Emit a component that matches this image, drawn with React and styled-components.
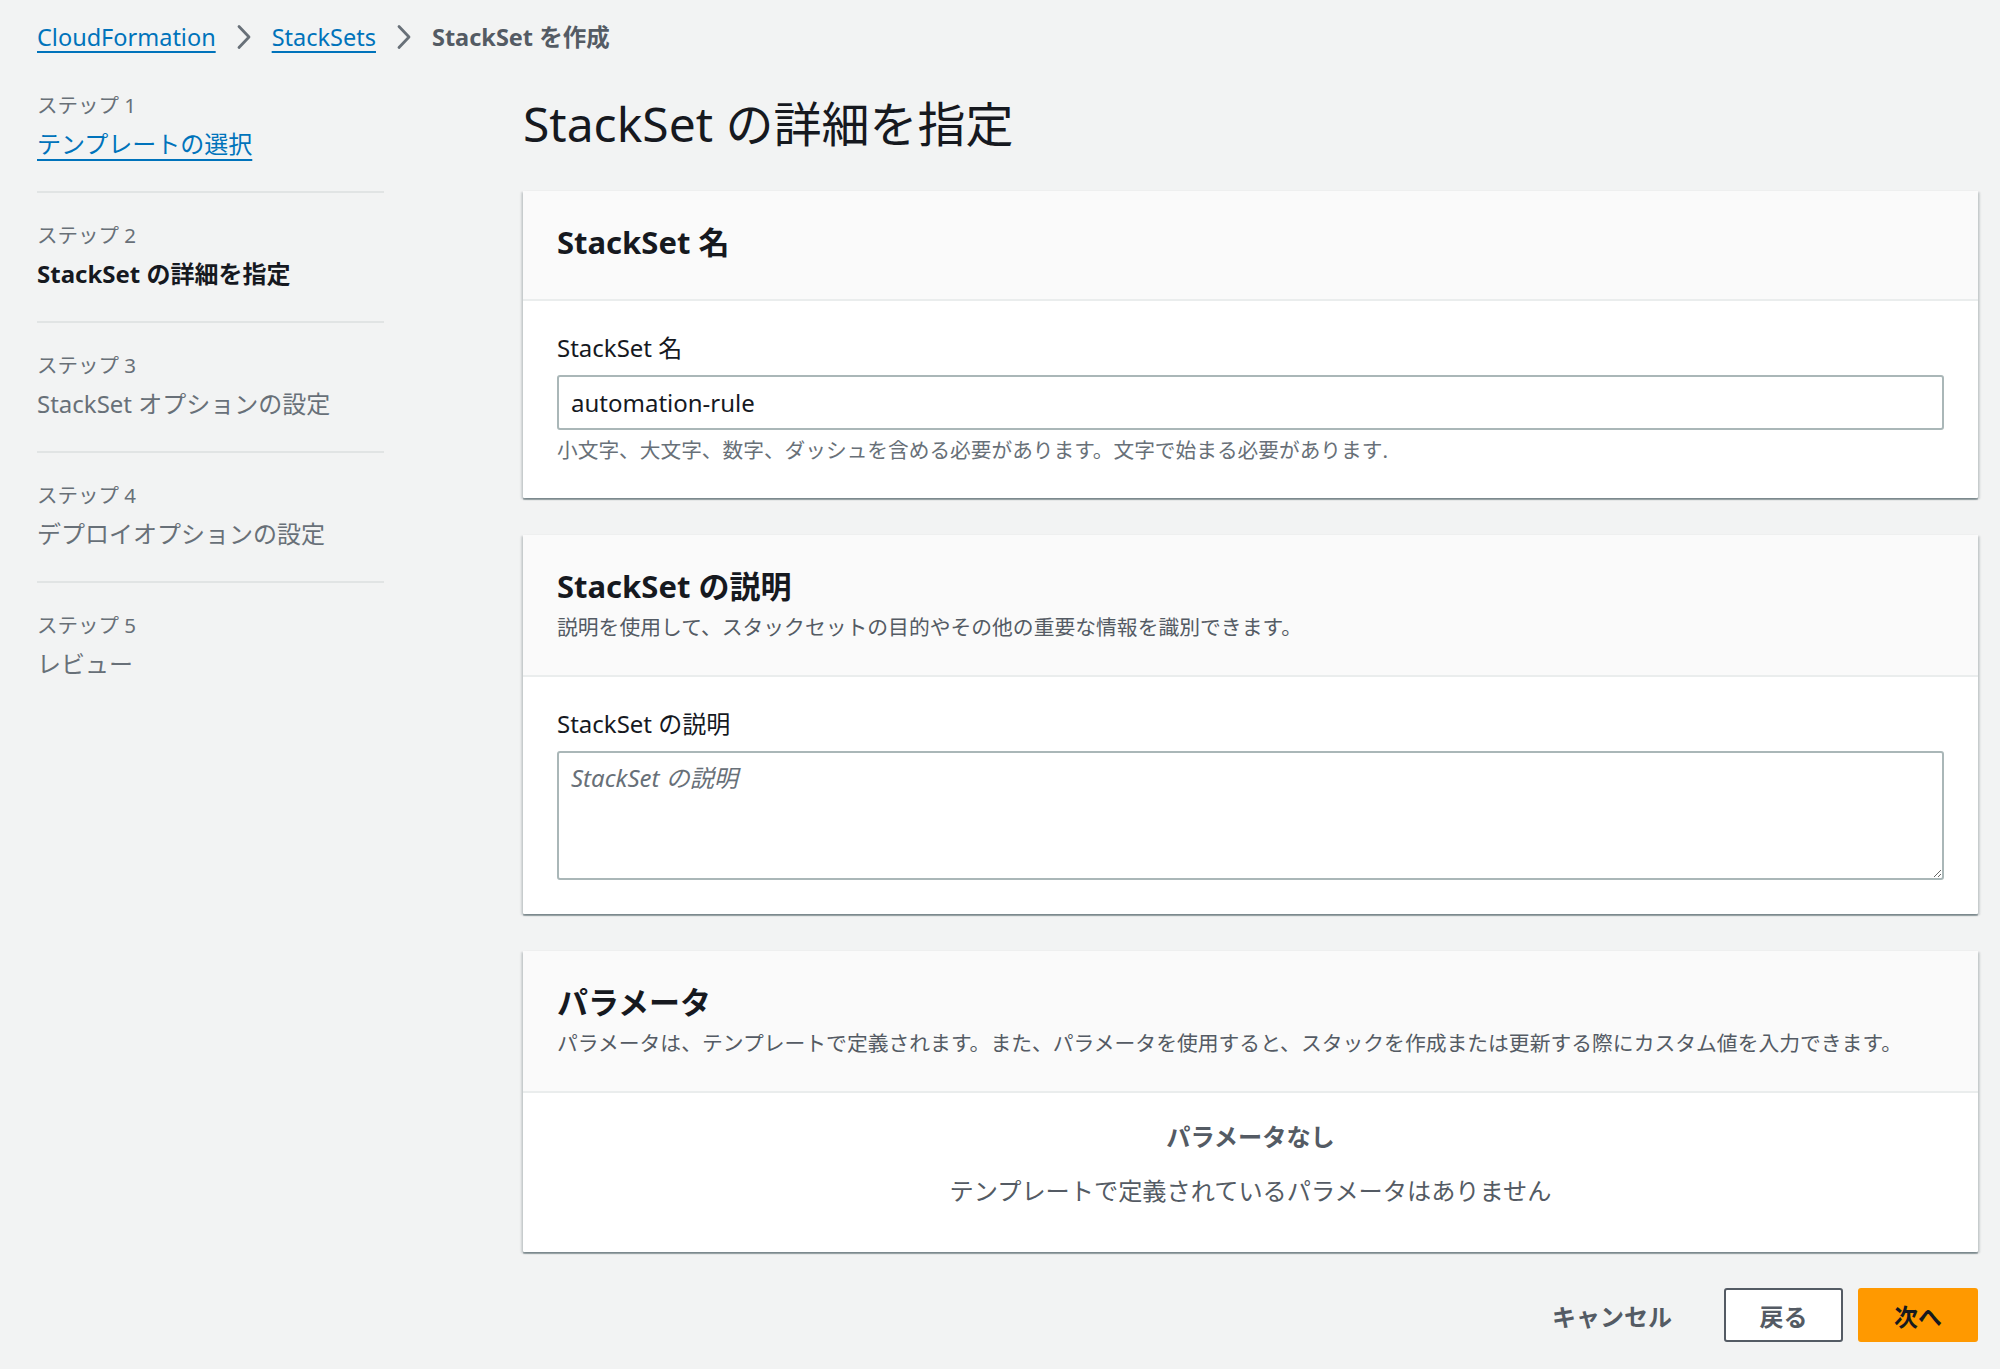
import styled, { createGlobalStyle } from 'styled-components';

const GlobalStyle = createGlobalStyle`
    html, body {
        margin: 0;
        padding: 0;
        background: #f2f3f3;
    }
    body {
        font-family: "Noto Sans", "Noto Sans CJK JP", sans-serif;
        color: #16191f;
    }
    * { box-sizing: border-box; }
`

const steps = [
    { label: 'ステップ 1', title: 'テンプレートの選択', state: 'link' },
    { label: 'ステップ 2', title: 'StackSet の詳細を指定', state: 'active' },
    { label: 'ステップ 3', title: 'StackSet オプションの設定', state: 'idle' },
    { label: 'ステップ 4', title: 'デプロイオプションの設定', state: 'idle' },
    { label: 'ステップ 5', title: 'レビュー', state: 'idle' },
]

const Chevron = () => (
    <svg width="16" height="26" viewBox="0 0 16 26" fill="none">
        <path d="M3 2.5 L13 13 L3 23.5" stroke="#687078" strokeWidth="2.8" strokeLinecap="round" strokeLinejoin="round"/>
    </svg>
)

const App = () => {
    return (
        <Page>
            <GlobalStyle/>
            <Breadcrumbs>
                <Crumb href="#">CloudFormation</Crumb>
                <Chevron/>
                <Crumb href="#">StackSets</Crumb>
                <Chevron/>
                <Current>StackSet を作成</Current>
            </Breadcrumbs>

            <Layout>
                <Nav>
                    {steps.map((s, i) => (
                        <Step key={i} first={i === 0}>
                            <StepLabel>{s.label}</StepLabel>
                            <StepTitle state={s.state}>
                                {s.state === 'link' ? <a href="#">{s.title}</a> : s.title}
                            </StepTitle>
                        </Step>
                    ))}
                </Nav>

                <Main>
                    <PageTitle>StackSet の詳細を指定</PageTitle>

                    <Container>
                        <Header solo>
                            <HeaderTitle>StackSet 名</HeaderTitle>
                        </Header>
                        <Content>
                            <Label>StackSet 名</Label>
                            <Input defaultValue="automation-rule"/>
                            <Hint>小文字、大文字、数字、ダッシュを含める必要があります。文字で始まる必要があります.</Hint>
                        </Content>
                    </Container>

                    <Container>
                        <Header>
                            <HeaderTitle>StackSet の説明</HeaderTitle>
                            <HeaderDesc>説明を使用して、スタックセットの目的やその他の重要な情報を識別できます。</HeaderDesc>
                        </Header>
                        <Content>
                            <Label>StackSet の説明</Label>
                            <TextArea placeholder="StackSet の説明"/>
                        </Content>
                    </Container>

                    <Container>
                        <Header>
                            <HeaderTitle>パラメータ</HeaderTitle>
                            <HeaderDesc>パラメータは、テンプレートで定義されます。また、パラメータを使用すると、スタックを作成または更新する際にカスタム値を入力できます。</HeaderDesc>
                        </Header>
                        <Empty>
                            <EmptyTitle>パラメータなし</EmptyTitle>
                            <EmptyText>テンプレートで定義されているパラメータはありません</EmptyText>
                        </Empty>
                    </Container>

                    <Actions>
                        <LinkButton>キャンセル</LinkButton>
                        <Button>戻る</Button>
                        <Button primary>次へ</Button>
                    </Actions>
                </Main>
            </Layout>
        </Page>
    )
}

const Page = styled.div`
    padding: 20px 22px 40px 37px;
    min-height: 1369px;
`

const Breadcrumbs = styled.nav`
    display: flex;
    align-items: center;
    gap: 20px;
    height: 34px;
    font-size: 23.5px;
    line-height: 34px;
`

const Crumb = styled.a`
    color: #0073bb;
    text-decoration: underline;
    text-decoration-thickness: 2px;
    text-underline-offset: 5px;
`

const Current = styled.span`
    color: #545b64;
    font-weight: 700;
`

const Layout = styled.div`
    display: flex;
    align-items: flex-start;
    gap: 139px;
    margin-top: 9px;
`

const Nav = styled.ul`
    list-style: none;
    margin: 0;
    padding: 0;
    width: 347px;
    flex: none;
`

const Step = styled.li`
    padding: 28px 0 30px;
    border-top: ${p => p.first ? 'none' : '2px solid #e1e4e4'};
`

const StepLabel = styled.div`
    font-size: 20.5px;
    line-height: 28px;
    color: #687078;
`

const StepTitle = styled.div`
    margin-top: 8px;
    font-size: 24px;
    line-height: 34px;
    color: ${p => p.state === 'active' ? '#16191f' : '#687078'};
    font-weight: ${p => p.state === 'active' ? 700 : 400};
    a {
        color: #0073bb;
        text-decoration: underline;
        text-decoration-thickness: 2px;
        text-underline-offset: 6px;
    }
`

const Main = styled.main`
    flex: 1;
    min-width: 0;
    display: flex;
    flex-direction: column;
    gap: 37px;
`

const PageTitle = styled.h1`
    margin: 31px 0 0;
    font-size: 48px;
    line-height: 60px;
    font-weight: 400;
    color: #16191f;
`

const Container = styled.section`
    background: #ffffff;
    border-radius: 1px;
    box-shadow: 0 2px 1px 0 rgba(0, 28, 36, 0.35), 2px 1px 2px 0 rgba(0, 28, 36, 0.15), -2px 1px 2px 0 rgba(0, 28, 36, 0.15);
`

const Header = styled.header`
    background: #fafafa;
    border-bottom: 2px solid #eaeded;
    padding: ${p => p.solo ? '31px 34px 37px' : '31px 34px 34px'};
`

const HeaderTitle = styled.h2`
    margin: 0;
    font-size: 31px;
    line-height: 40px;
    font-weight: 700;
    color: #16191f;
`

const HeaderDesc = styled.p`
    margin: 7px 0 0;
    font-size: 20.8px;
    line-height: 28px;
    color: #545b64;
`

const Content = styled.div`
    padding: 30px 34px 34px;
    display: flex;
    flex-direction: column;
`

const Label = styled.label`
    font-size: 24px;
    line-height: 34px;
    color: #16191f;
    margin-bottom: 10px;
`

const Input = styled.input`
    height: 55px;
    width: 100%;
    border: 2px solid #aab7b8;
    border-radius: 3px;
    padding: 0 12px;
    font-family: inherit;
    font-size: 24px;
    color: #16191f;
    background: #fff;
    outline: none;
`

const Hint = styled.div`
    margin-top: 6px;
    font-size: 20.7px;
    line-height: 28px;
    color: #687078;
`

const TextArea = styled.textarea`
    height: 129px;
    width: 100%;
    border: 2px solid #aab7b8;
    border-radius: 3px;
    padding: 8px 12px;
    font-family: inherit;
    font-size: 24px;
    line-height: 34px;
    color: #16191f;
    background: #fff;
    outline: none;
    resize: vertical;
    &::placeholder {
        color: #687078;
        font-style: italic;
    }
`

const Empty = styled.div`
    padding: 27px 34px 44px;
    display: flex;
    flex-direction: column;
    align-items: center;
    gap: 20px;
    color: #545b64;
    font-size: 24.2px;
    line-height: 34px;
`

const EmptyTitle = styled.div`
    font-weight: 700;
`

const EmptyText = styled.div``

const Actions = styled.div`
    display: flex;
    justify-content: flex-end;
    align-items: center;
    gap: 15px;
    margin-top: -1px;
`

const LinkButton = styled.button`
    border: none;
    background: none;
    padding: 0 26px;
    height: 54px;
    margin-right: 11px;
    font-family: inherit;
    font-size: 24px;
    font-weight: 700;
    color: #545b64;
`

const Button = styled.button`
    height: 54px;
    width: ${p => p.primary ? '120px' : '119px'};
    border-radius: 3px;
    border: 2px solid ${p => p.primary ? '#ff9900' : '#545b64'};
    background: ${p => p.primary ? '#ff9900' : '#ffffff'};
    color: ${p => p.primary ? '#16191f' : '#545b64'};
    font-family: inherit;
    font-size: 24px;
    font-weight: 700;
`

export default App
